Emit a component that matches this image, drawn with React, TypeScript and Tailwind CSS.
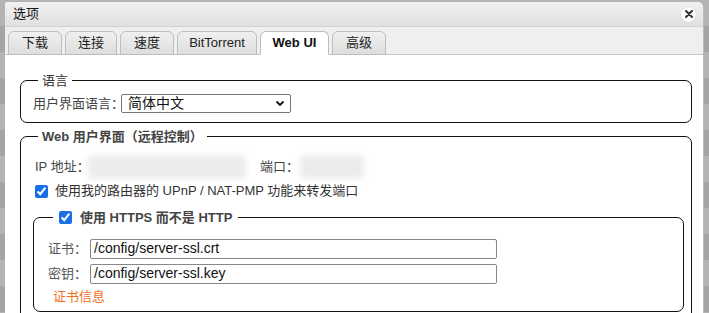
import React from "react";

const font = { fontFamily: '"Liberation Sans", "Noto Sans CJK SC", sans-serif' };

const tabs = [
  { label: "下载", w: "w-[54px]" },
  { label: "连接", w: "w-[52px]" },
  { label: "速度", w: "w-[54px]" },
  { label: "BitTorrent", w: "w-[80px]" },
  { label: "Web UI", w: "w-[69px]", active: true },
  { label: "高级", w: "w-[54px]" },
];

function Blurred({ w }: { w: string }) {
  return <div className={`${w} h-[24px] rounded-[3px] bg-[#ececec] blur-[3px]`} />;
}

export default function App() {
  return (
    <div
      className="w-[709px] h-[313px] overflow-hidden bg-[repeating-linear-gradient(to_bottom,#b4b4b4_0px,#b4b4b4_26px,#a4a4a4_26px,#a4a4a4_52px)] pl-[5px] pt-[2px]"
      style={font}
    >
      <div className="w-[699px] h-[320px] bg-white rounded-tr-[6px] rounded-tl-[3px] border-r border-[#bcbcbc] overflow-hidden">
        {/* title bar */}
        <div className="h-[25px] flex items-center justify-between pl-[8px] pr-[7px] bg-gradient-to-b from-[#f2f2f2] to-[#e0e0e0] border-b border-[#d2d2d2]">
          <span className="text-[13px] text-[#111]">选项</span>
          <div className="w-[15px] h-[15px] rounded-full bg-white shadow-[0_0_1px_#bbb] flex items-center justify-center">
            <svg width="8" height="8" viewBox="0 0 8 8">
              <path d="M1 1 L7 7 M7 1 L1 7" stroke="#333" strokeWidth="2" strokeLinecap="round" />
            </svg>
          </div>
        </div>

        {/* tab bar */}
        <div className="h-[28px] flex items-end gap-[3px] pl-[3px] bg-[#efefef] border-b border-[#c4c4c4]">
          {tabs.map((t) => (
            <div
              key={t.label}
              className={`${t.w} h-[24px] -mb-px flex items-center justify-center rounded-t-[6px] border border-[#bdbdbd] text-[13px] ${
                t.active
                  ? "bg-white border-b-white font-bold text-[#111]"
                  : "bg-gradient-to-b from-[#f0f0f0] to-[#dedede] text-[#222]"
              }`}
            >
              {t.label}
            </div>
          ))}
        </div>

        {/* content */}
        <div className="pl-[15px] pr-[11px] pt-[16px] flex flex-col gap-[4px]">
          <fieldset className="border border-[#111] rounded-[7px] pl-[12px] pb-[5px]">
            <legend className="ml-[5px] px-[4px] text-[13px] text-[#333]">语言</legend>
            <div className="flex items-center h-[26px] text-[13px] text-[#444]">
              <span className="w-[88px] shrink-0 whitespace-nowrap">用户界面语言：</span>
              <div className="w-[170px] h-[19px] border border-[#777] rounded-[2px] flex items-center justify-between pl-[6px] pr-[5px] text-[14px] text-[#111]">
                <span>简体中文</span>
                <svg width="10" height="7" viewBox="0 0 10 7">
                  <path d="M1.5 1.5 L5 5 L8.5 1.5" stroke="#111" strokeWidth="1.8" fill="none" />
                </svg>
              </div>
            </div>
          </fieldset>

          <fieldset className="border border-[#111] rounded-[7px] pl-[14px] pr-[7px] pb-[10px]">
            <legend className="ml-[3px] px-[4px] text-[13px] font-bold text-[#444]">Web 用户界面（远程控制）</legend>
            <div className="flex items-center h-[30px] mt-[6px] text-[13px] text-[#444]">
              <span className="w-[53px] shrink-0 whitespace-nowrap">IP 地址：</span>
              <Blurred w="w-[158px]" />
              <span className="ml-[14px] w-[40px] shrink-0 whitespace-nowrap">端口：</span>
              <Blurred w="w-[64px]" />
            </div>
            <label className="flex items-center h-[18px] text-[13px] text-[#333]">
              <input type="checkbox" defaultChecked className="w-[13px] h-[13px] m-0 accent-[#1a6fe6]" />
              <span className="ml-[7px]">使用我的路由器的 UPnP / NAT-PMP 功能来转发端口</span>
            </label>

            <fieldset className="mt-[8px] -ml-[2px] border border-[#111] rounded-[7px] pl-[14px] pb-[4px]">
              <legend className="ml-[5px] px-[6px] flex items-center gap-[8px] text-[13px] font-bold text-[#444]">
                <input type="checkbox" defaultChecked className="w-[13px] h-[13px] m-0 accent-[#1a6fe6]" />
                <span>使用 HTTPS 而不是 HTTP</span>
              </legend>
              <div className="flex flex-col gap-[5px] mt-[11px] text-[13px]">
                <div className="flex items-center">
                  <span className="w-[42px] shrink-0 whitespace-nowrap text-[#555]">证书：</span>
                  <div className="w-[407px] h-[20px] border border-[#888] rounded-[2px] flex items-center pl-[3px] text-[14px] text-[#111]">
                    /config/server-ssl.crt
                  </div>
                </div>
                <div className="flex items-center">
                  <span className="w-[42px] shrink-0 whitespace-nowrap text-[#555]">密钥：</span>
                  <div className="w-[407px] h-[20px] border border-[#888] rounded-[2px] flex items-center pl-[3px] text-[14px] text-[#111]">
                    /config/server-ssl.key
                  </div>
                </div>
                <span className="ml-[5px] -mt-[2px] leading-[20px] text-[#f0701e]">证书信息</span>
              </div>
            </fieldset>
          </fieldset>
        </div>
      </div>
    </div>
  );
}
